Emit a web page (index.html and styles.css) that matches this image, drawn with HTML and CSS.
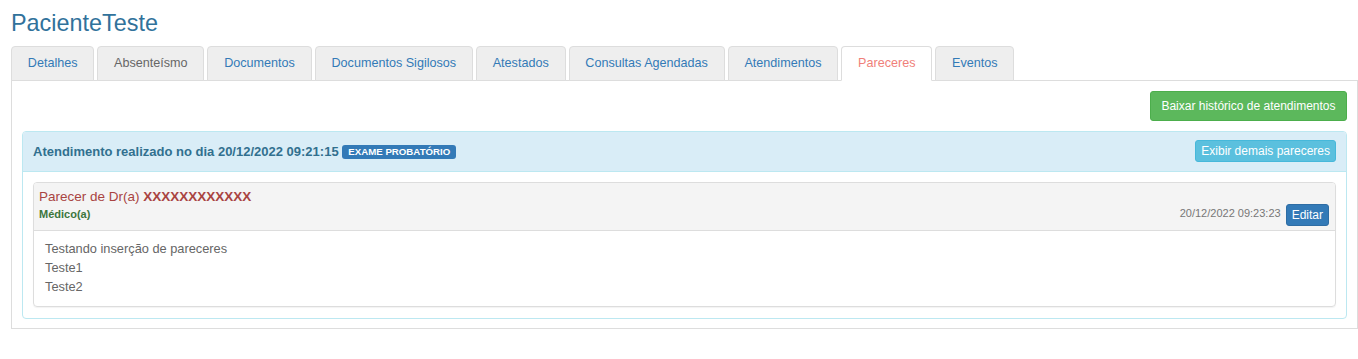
FILE: index.html
```html
<!DOCTYPE html>
<html lang="pt-br">
<head>
    <meta charset="UTF-8">
    <title>PacienteTeste</title>
    <link rel="stylesheet" href="styles.css">
</head>
<body>
    <h2 class="nome-paciente">PacienteTeste</h2>

    <ul class="abas">
        <li><a href="#">Detalhes</a></li>
        <li><a href="#" class="apagada">Absenteísmo</a></li>
        <li><a href="#">Documentos</a></li>
        <li><a href="#">Documentos Sigilosos</a></li>
        <li><a href="#">Atestados</a></li>
        <li><a href="#">Consultas Agendadas</a></li>
        <li><a href="#">Atendimentos</a></li>
        <li><a href="#" class="ativa">Pareceres</a></li>
        <li><a href="#">Eventos</a></li>
    </ul>

    <div class="conteudo-aba">
        <div class="acoes">
            <button class="botao botao-verde">Baixar histórico de atendimentos</button>
        </div>

        <div class="painel painel-info">
            <div class="painel-cabecalho">
                <span class="atendimento-titulo">Atendimento realizado no dia 20/12/2022 09:21:15 <span class="rotulo">EXAME PROBATÓRIO</span></span>
                <button class="botao botao-pequeno botao-info">Exibir demais pareceres</button>
            </div>
            <div class="painel-corpo">
                <div class="parecer">
                    <div class="parecer-cabecalho">
                        <div>
                            <div class="parecer-titulo">Parecer de Dr(a) <b>XXXXXXXXXXXX</b></div>
                            <div class="parecer-cargo">Médico(a)</div>
                        </div>
                        <div class="parecer-lado">
                            <span class="parecer-data">20/12/2022 09:23:23</span>
                            <button class="botao botao-pequeno botao-azul">Editar</button>
                        </div>
                    </div>
                    <div class="parecer-corpo">
                        Testando inserção de pareceres<br>
                        Teste1<br>
                        Teste2
                    </div>
                </div>
            </div>
        </div>
    </div>
</body>
</html>
```

FILE: styles.css
```css
body {
    font-family: "Liberation Sans", Arial, sans-serif;
    margin: 0;
    padding: 0 0 0 11px;
    color: #555;
    background: #fff;
}
.nome-paciente {
    font-size: 23.4px;
    font-weight: normal;
    line-height: 26px;
    color: #31729b;
    margin: 10px 0 10px 0;
}
.abas {
    list-style: none;
    margin: 0;
    padding: 0;
    display: flex;
    gap: 3px;
    border-bottom: 1px solid #ddd;
}
.abas li {
    margin-bottom: -1px;
}
.abas a {
    display: block;
    padding: 7px 15.8px 8px;
    font-size: 12.6px;
    line-height: 18px;
    color: #337ab7;
    text-decoration: none;
    background: #eee;
    border: 1px solid #ddd;
    border-radius: 4px 4px 0 0;
}
.abas a.apagada {
    color: #666;
}
.abas a.ativa {
    color: #f07f7a;
    background: #fff;
    border-bottom-color: #fff;
}
.conteudo-aba {
    border: 1px solid #ddd;
    border-top: none;
    padding: 10px 10px 9px;
}
.acoes {
    display: flex;
    justify-content: flex-end;
    margin-bottom: 10px;
}
.botao {
    font-family: "Liberation Sans", Arial, sans-serif;
    font-size: 12px;
    line-height: 18px;
    padding: 5px 10.5px;
    color: #fff;
    border: 1px solid transparent;
    border-radius: 3px;
    cursor: pointer;
}
.botao-pequeno {
    padding: 1px 5px;
}
.botao-verde {
    background: #5cb85c;
    border-color: #4cae4c;
}
.botao-info {
    background: #5bc0de;
    border-color: #46b8da;
}
.botao-azul {
    background: #337ab7;
    border-color: #2e6da4;
}
.painel {
    border: 1px solid #ddd;
    border-radius: 4px;
    background: #fff;
}
.painel-info {
    border-color: #bce8f1;
}
.painel-cabecalho {
    display: flex;
    justify-content: space-between;
    align-items: center;
    padding: 8px 10px 9px;
    background: #d9edf7;
    border-bottom: 1px solid #bce8f1;
    border-radius: 3px 3px 0 0;
}
.atendimento-titulo {
    font-size: 13px;
    font-weight: bold;
    color: #31708f;
}
.rotulo {
    display: inline-block;
    margin-left: 0;
    padding: 2px 6px;
    font-size: 9.7px;
    line-height: 10px;
    font-weight: bold;
    color: #fff;
    background: #337ab7;
    border-radius: 3px;
    vertical-align: 1px;
}
.painel-corpo {
    padding: 10px 10px 11px;
}
.parecer {
    border: 1px solid #ddd;
    border-radius: 4px;
    box-shadow: 0 1px 1px rgba(0, 0, 0, 0.05);
}
.parecer-cabecalho {
    display: flex;
    justify-content: space-between;
    align-items: flex-end;
    padding: 5px 6px 8px 5px;
    background: #f4f4f4;
    border-bottom: 1px solid #ddd;
    border-radius: 3px 3px 0 0;
}
.parecer-titulo {
    font-size: 13.5px;
    line-height: 18px;
    color: #a94442;
}
.parecer-cargo {
    font-size: 11px;
    line-height: 16px;
    font-weight: bold;
    color: #3c763d;
}
.parecer-lado {
    display: flex;
    align-items: flex-start;
    gap: 5px;
    margin-bottom: -4px;
}
.parecer-data {
    font-size: 11px;
    line-height: 18px;
    color: #777;
}
.parecer-corpo {
    padding: 8px 11px 10px;
    font-size: 12.8px;
    line-height: 19px;
    color: #666;
}
```
